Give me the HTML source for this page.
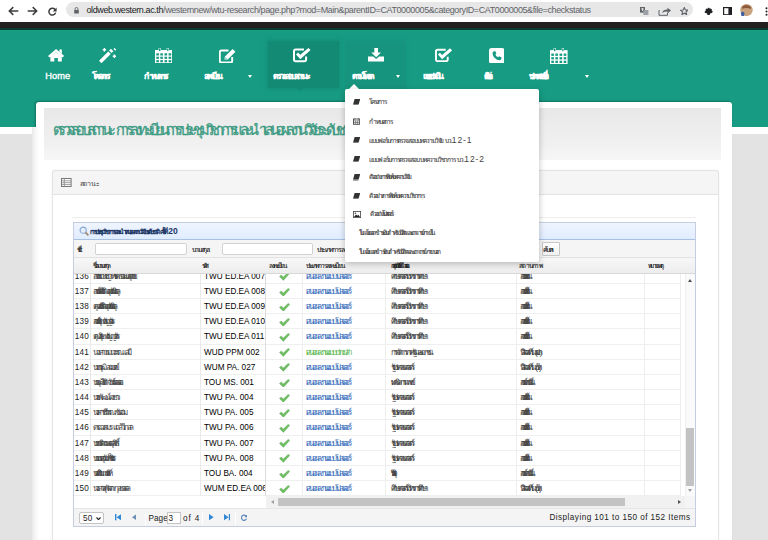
<!DOCTYPE html>
<html><head><meta charset="utf-8">
<title>WTU Research - ตรวจสอบสถานะ</title>
<style>
*{box-sizing:border-box;margin:0;padding:0}
html,body{width:768px;height:540px;overflow:hidden;background:#fff;font-family:"Liberation Sans",sans-serif;position:relative}
.a{position:absolute}
svg{display:block}
.t{font-size:6px;-webkit-text-stroke:0.12px currentColor}
/* browser chrome */
#chrome{left:0;top:0;width:768px;height:22.4px;background:#fff}
#pill{left:65.7px;top:1.8px;width:627px;height:15.4px;border-radius:7.7px;background:#e7e7e7}
#url{left:86.5px;top:5.2px;font-size:9px;line-height:11px;color:#5f6368;white-space:nowrap;letter-spacing:-0.4px}
#url b{font-weight:normal;color:#202124}
#dark{left:0;top:22.4px;width:768px;height:7.4px;background:#231f20;border-bottom:2px solid #0b3a2f}
/* header */
#hdr{left:0;top:29.8px;width:768px;height:97.2px;background:#179b83}
#wstrip{left:0;top:127px;width:768px;height:7px;background:#fff}
#gray{left:0;top:134px;width:768px;height:406px;background:#e3e3e3}
#cont{left:36px;top:101.5px;width:696.4px;height:440px;background:#fff;border-radius:3px 3px 0 0;box-shadow:-1px -1px 2px rgba(0,40,30,0.35)}
.act{background:#138a74;box-shadow:0 0 4px 1px rgba(19,138,116,0.8)}
.nv{top:69.8px;height:12px;line-height:12px;color:#fff;white-space:nowrap;font-size:8px}
.nv.t{font-size:8.6px;-webkit-text-stroke:0.6px #fff}
.car{position:absolute;width:0;height:0;border-left:2.6px solid transparent;border-right:2.6px solid transparent;border-top:3px solid #fff}
/* title */
#tband{left:44px;top:107.8px;width:677px;height:52.4px;background:linear-gradient(#e8e8e8 0,#eaeaea 22%,#ececec 26%,#eeeeee 52%,#f0f0f0 60%,#f0f0f0 72%,#f3f3f3 80%,#f6f6f6 100%)}
#title{left:53px;top:120px;height:20px;line-height:20px;color:#3f9c84;font-size:14.5px;white-space:nowrap;-webkit-text-stroke:0.3px #3f9c84}
/* panel */
#panel{left:52px;top:170px;width:666.5px;height:380px;border:1px solid #e6e6e6;box-shadow:0 0 3px rgba(0,0,0,0.05);border-radius:3px;background:#fff}
#phead{left:52px;top:170px;width:666.5px;height:24.5px;background:#f5f5f5;border:1px solid #e3e3e3;border-radius:3px 3px 0 0}
#ptext{left:79.5px;top:178.5px;font-size:7px;line-height:10px;color:#555;-webkit-text-stroke:0.1px #555}
/* grid */
#grid{left:72.5px;top:222.2px;width:623.5px;height:304.6px;border:1px solid #c6cde0;background:#fff;overflow:hidden}
#gtitle{left:0;top:0;width:100%;height:16.6px;background:linear-gradient(#eff5ff 0,#e0ecff 100%);border-bottom:1px solid #a9c2e3}
#gtt{left:16px;top:3px;line-height:11px;color:#1b3766;font-size:6.5px;-webkit-text-stroke:0.3px #1b3766;white-space:nowrap}
#tbar{left:0;top:16.6px;width:100%;height:17.8px;background:#f5f5f5;border-bottom:1px solid #e2e2e2}
.inp{position:absolute;top:3.4px;height:12.2px;background:#fff;border:1px solid #d2d2d2;border-radius:2px}
.lbl{position:absolute;top:3.8px;line-height:11px;font-size:6.8px;color:#222;white-space:nowrap}
#ghead{left:0;top:34.4px;width:100%;height:16.8px;background:linear-gradient(#f7f7f7 0,#ededed 100%);border-bottom:1px solid #d8d8d8}
.hc{position:absolute;top:2.8px;line-height:11px;color:#222;white-space:nowrap;font-size:6.5px}
#gbody{left:0;top:51.2px;width:100%;height:222px;overflow:hidden}
.row{position:absolute;left:0;width:607px;height:15.17px;border-bottom:1px solid #efefef}
.c{position:absolute;top:0;height:15.15px;line-height:15px;font-size:8.2px;color:#000;white-space:nowrap;overflow:hidden}
.c.t{font-size:8px;color:#4a4a4a;-webkit-text-stroke:0.05px currentColor}
.rn{left:0;width:17px;text-align:right;padding-right:0.6px;border-right:1px solid #e8e8e8;color:#222;letter-spacing:0.15px}
.nm{left:17px;width:110px;padding-left:2.5px;border-right:1px solid #eaeaea}
.cd{left:127px;width:65.2px;padding-left:3.5px;border-right:1px solid #dcdcdc}
.ck{left:192.2px;width:37.3px;border-right:1px solid #eeeeee}
.ck svg{position:absolute;left:13.3px;top:3.6px}
.ty{left:229.5px;width:83px;padding-left:2.7px;border-right:1px solid #eeeeee}
.c.tp0{color:#4374c0}
.c.tp1{color:#5dba55}
.gp{left:312.5px;width:131px;padding-left:4.5px;border-right:1px solid #eeeeee}
.stt{left:443.5px;width:127.5px;padding-left:2.5px;border-right:1px solid #eeeeee}
.nt{left:571px;width:36px;border-right:1px solid #eeeeee}
#vscroll{left:611.5px;top:51.2px;width:10px;height:222px;background:#fafafa;border-left:1px solid #f0f0f0}
#vthumb{left:612.5px;top:205px;width:8px;height:58px;background:#c3c3c3}
#hscroll{left:192.2px;top:273.2px;width:429.3px;height:11.2px;background:#f1f1f1}
#hthumb{left:204px;top:274.6px;width:347.5px;height:8px;background:#c3c3c3}
#corner{left:611.5px;top:273.2px;width:10px;height:11.2px;background:#f5f5f5}
.arr{position:absolute;width:0;height:0}
#pager{left:0;top:284.4px;width:100%;height:19.2px;background:#f4f4f4;border-top:1px solid #e6e6e6}
.pt{position:absolute;top:4px;font-size:8.2px;line-height:11px;color:#222;white-space:nowrap}
/* dropdown */
#dd{left:345.4px;top:89px;width:193.4px;height:173.3px;background:#fff;border-radius:2px;box-shadow:0 2px 6px rgba(0,0,0,0.25)}
.di{position:absolute;left:23.8px;height:12px;line-height:12px;color:#444;font-size:6.5px;white-space:nowrap;-webkit-text-stroke:0.1px #444}
.dic{position:absolute;left:7.5px}
</style></head>
<body>
<div id="chrome" class="a"></div>
<svg class="a" style="left:7.5px;top:6px" width="11" height="10" viewBox="0 0 11 10"><path d="M10.3 5 H1.6 M5.3 1.1 L1.3 5 L5.3 8.9" fill="none" stroke="#3c3c3c" stroke-width="1.5"/></svg>
<svg class="a" style="left:26.8px;top:6px" width="11" height="10" viewBox="0 0 11 10"><path d="M0.7 5 H9.4 M5.7 1.1 L9.7 5 L5.7 8.9" fill="none" stroke="#3c3c3c" stroke-width="1.5"/></svg>
<svg class="a" style="left:47.5px;top:6.5px" width="9" height="9" viewBox="0 0 9 9"><path d="M7.4 3.2 A3.4 3.4 0 1 0 7.6 5.6" fill="none" stroke="#3c3c3c" stroke-width="1.5"/><path d="M8.6 0.6 V4.4 H4.8 Z" fill="#3c3c3c"/></svg>
<div id="pill" class="a"></div>
<svg class="a" style="left:74.3px;top:7.3px" width="5" height="6.5" viewBox="0 0 5 6.5"><path d="M1.1 3 V1.9 A1.4 1.4 0 0 1 3.9 1.9 V3" fill="none" stroke="#5f6368" stroke-width="0.9"/><rect x="0.2" y="2.9" width="4.6" height="3.6" rx="0.5" fill="#5f6368"/></svg>
<div id="url" class="a"><b>oldweb.western.ac.th</b>/westernnew/wtu-research/page.php?mod=Main&amp;parentID=CAT0000005&amp;categoryID=CAT0000005&amp;file=checkstatus</div>
<svg class="a" style="left:640px;top:6.7px" width="8.5" height="8.7" viewBox="0 0 8.5 8.7"><rect x="0" y="0" width="5" height="5.6" fill="#5f6368"/><rect x="3.4" y="3" width="5" height="5.6" fill="#9aa0a6"/><path d="M1 2 H4 M2.5 1 V4" stroke="#fff" stroke-width="0.7"/></svg>
<svg class="a" style="left:657.5px;top:6.7px" width="14" height="9" viewBox="0 0 14 9"><path d="M1 3 V8.3 H9.5 V6" fill="none" stroke="#5f6368" stroke-width="1"/><path d="M4 6 Q5 2.6 9.5 2.6 V0.8 L13 3.6 L9.5 6.4 V4.6 Q6 4.6 4 6 Z" fill="#5f6368"/></svg>
<svg class="a" style="left:679.8px;top:6.5px" width="8.6" height="8.4" viewBox="0 0 10 9.6"><path d="M5 0.6 L6.3 3.4 L9.3 3.6 L7 5.6 L7.7 8.7 L5 7.1 L2.3 8.7 L3 5.6 L0.7 3.6 L3.7 3.4 Z" fill="none" stroke="#5f6368" stroke-width="1.3"/></svg>
<svg class="a" style="left:704px;top:6.7px" width="8.5" height="8.5" viewBox="0 0 8.5 8.5"><path d="M0.5 2.3 H2.4 A1.3 1.3 0 0 1 4.9 2.3 H6.6 V4 A1.3 1.3 0 0 1 6.6 6.5 V8.2 H4.6 A1.2 1.2 0 0 0 2.4 8.2 H0.5 V6.3 A1.2 1.2 0 0 0 0.5 4.1 Z" fill="#202124" transform="rotate(-45 4.25 4.25) translate(0.6 -0.3)"/></svg>
<svg class="a" style="left:722.9px;top:6.7px" width="9.2" height="8.4" viewBox="0 0 9.2 8.4"><rect x="0.6" y="0.6" width="8" height="7.2" fill="none" stroke="#202124" stroke-width="1.2"/><rect x="5.4" y="0.6" width="3.2" height="7.2" fill="#202124"/></svg>
<svg class="a" style="left:740px;top:3.9px" width="13" height="12.2" viewBox="0 0 13 12.2"><ellipse cx="6.5" cy="6.1" rx="6.3" ry="6" fill="#c9a27e"/><path d="M2 3 Q6 -1 11 3 L10.6 5 Q6.5 3.2 2.4 5 Z" fill="#8a5a3a"/><path d="M0.8 9 Q2.5 6.5 4.5 9 L4 12.2 H1.5 Z" fill="#3e5fa8"/></svg>
<svg class="a" style="left:764.5px;top:6.5px" width="3" height="9" viewBox="0 0 3 9"><circle cx="1.5" cy="1.2" r="1" fill="#202124"/><circle cx="1.5" cy="4.5" r="1" fill="#202124"/><circle cx="1.5" cy="7.8" r="1" fill="#202124"/></svg>
<div id="dark" class="a"></div>
<div id="hdr" class="a"></div>
<div id="wstrip" class="a"></div>
<div id="gray" class="a"></div>
<div id="cont" class="a"></div>
<div class="a" style="left:32px;top:127px;width:7px;height:413px;background:linear-gradient(to right,#e9e9e9,#f4f4f4 40%,#fff)"></div>

<!-- nav -->
<div class="a act" style="left:267.5px;top:41.2px;width:71.5px;height:47px"></div>
<div class="a" style="left:296px;top:87.5px;width:0;height:0;border-left:4px solid transparent;border-right:4px solid transparent;border-top:3.5px solid #138a74"></div>
<div class="a act" style="left:344.6px;top:41.2px;width:61.5px;height:47px;background:#16947d;box-shadow:0 0 3px rgba(22,148,125,0.8)"></div>

<div class="a nv" style="left:45.3px;top:70.2px;font-size:9.3px;-webkit-text-stroke:0.35px #fff">Home</div>
<div class="a nv t" style="left:91.6px;letter-spacing:-2.66px">โครงการ</div>
<div class="a nv t" style="left:143.8px;letter-spacing:-3.01px">กำหนดการ</div>
<div class="a nv t" style="left:203.6px;letter-spacing:-2.83px">ลงทะเบียน</div>
<div class="a car" style="left:247.5px;top:74.5px"></div>
<div class="a nv t" style="left:272.9px;letter-spacing:-2.17px">ตรวจสอบสถานะ</div>
<div class="a nv t" style="left:351.7px;letter-spacing:-2.96px">ดาวน์โหลด</div>
<div class="a car" style="left:395.5px;top:74.5px"></div>
<div class="a nv t" style="left:422.5px;letter-spacing:-3.11px">แบบประเมิน</div>
<div class="a nv t" style="left:483.8px;letter-spacing:-4.70px">ติดต่อ</div>
<div class="a nv t" style="left:528.7px;letter-spacing:-3.52px">ประกาศรายชื่อ</div>
<div class="a car" style="left:584.5px;top:74.5px"></div>
<!-- nav icons -->
<svg class="a" style="left:48.3px;top:49.3px" width="16.2" height="12.5" viewBox="0 0 16.2 12.5"><path fill="#fff" d="M8.1 0 L16.2 6.9 L14.6 8.5 L8.1 3 L1.6 8.5 L0 6.9 Z M11.4 0.5 H13.9 V4.7 L11.4 2.6 Z M2.4 7.7 L8.1 3.2 L13.8 7.7 V12.5 H9.9 V9.1 H6.3 V12.5 H2.4 Z"/></svg>
<svg class="a" style="left:98.9px;top:48.2px" width="17.2" height="15.2" viewBox="0 0 17.2 15.2"><path fill="#fff" d="M0 12.7 L9.3 3.4 L11.8 5.9 L2.5 15.2 Z M10.1 2.6 L11.9 0.8 L14.4 3.3 L12.6 5.1 Z"/><path stroke="#fff" stroke-width="1.4" d="M5.4 0 V3.4 M3.7 1.7 H7.1 M15.4 6.6 V10 M13.7 8.3 H17.1 M15 0.4 L16.8 2.2"/></svg>
<svg class="a" style="left:154.8px;top:47.9px" width="17.5" height="15.6" viewBox="0 0 17.5 15.6"><path fill="#fff" d="M0 2 H17.5 V15.6 H0 Z"/><path fill="#fff" d="M3.6 0 H5.8 V3.6 H3.6 Z M11.7 0 H13.9 V3.6 H11.7 Z"/><g fill="#179b83"><rect x="4" y="0.4" width="1.4" height="2.6"/><rect x="12.1" y="0.4" width="1.4" height="2.6"/>
<rect x="1.3" y="5.3" width="2.6" height="2.2"/><rect x="5.3" y="5.3" width="2.6" height="2.2"/><rect x="9.5" y="5.3" width="2.6" height="2.2"/><rect x="13.6" y="5.3" width="2.6" height="2.2"/>
<rect x="1.3" y="8.7" width="2.6" height="2.2"/><rect x="5.3" y="8.7" width="2.6" height="2.2"/><rect x="9.5" y="8.7" width="2.6" height="2.2"/><rect x="13.6" y="8.7" width="2.6" height="2.2"/>
<rect x="1.3" y="12.1" width="2.6" height="2.2"/><rect x="5.3" y="12.1" width="2.6" height="2.2"/><rect x="9.5" y="12.1" width="2.6" height="2.2"/><rect x="13.6" y="12.1" width="2.6" height="2.2"/></g></svg>
<svg class="a" style="left:219.2px;top:48.5px" width="17.6" height="14.3" viewBox="0 0 17.6 14.3"><path fill="none" stroke="#fff" stroke-width="1.9" d="M9.5 1.5 H2.4 Q0.8 1.5 0.8 3.1 V11.9 Q0.8 13.5 2.4 13.5 H11.6 Q13.2 13.5 13.2 11.9 V8"/><path fill="#fff" d="M5.4 10.4 L6 7.6 L13.6 0 L16.4 2.8 L8.8 10.4 Z"/><path fill="#179b83" d="M6.6 8.3 L7.9 9.6 L6.5 9.9 Z"/></svg>
<svg class="a" style="left:292.9px;top:48.4px" width="18" height="14.4" viewBox="0 0 18 14.4"><path fill="none" stroke="#fff" stroke-width="2" d="M11 1.4 H2.6 Q1 1.4 1 3.1 V11.6 Q1 13.3 2.6 13.3 H11.4 Q13.1 13.3 13.1 11.6 V8.6"/><path fill="#fff" d="M3 6.4 L5 4.5 L7.3 6.8 L15.4 0 L17.6 2.1 L7.3 11.2 Z"/></svg>
<svg class="a" style="left:367.8px;top:48.4px" width="16.3" height="13.6" viewBox="0 0 16.3 13.6"><path fill="#fff" d="M6.3 0 H10 V4.6 H13 L8.15 9.3 L3.3 4.6 H6.3 Z M0 8.4 H5.2 L8.15 11 L11.1 8.4 H16.3 V13.6 H0 Z"/></svg>
<svg class="a" style="left:434.8px;top:47.9px" width="17.5" height="14.6" viewBox="0 0 18 14.4"><path fill="none" stroke="#fff" stroke-width="2" d="M11 1.4 H2.6 Q1 1.4 1 3.1 V11.6 Q1 13.3 2.6 13.3 H11.4 Q13.1 13.3 13.1 11.6 V8.6"/><path fill="#fff" d="M3 6.4 L5 4.5 L7.3 6.8 L15.4 0 L17.6 2.1 L7.3 11.2 Z"/></svg>
<svg class="a" style="left:488.5px;top:47.9px" width="15.6" height="15.6" viewBox="0 0 15.6 15.6"><rect width="15.6" height="15.6" rx="2.6" fill="#fff"/><path fill="#179b83" d="M4.6 3.4 L6.2 3 L7.4 5.6 L6.4 6.6 Q7.2 8.6 9.1 9.3 L10.1 8.3 L12.6 9.5 L12.3 11.1 Q11.8 12.4 10.4 12.3 Q6.6 11.8 4.3 8.2 Q3.4 6.4 3.6 4.6 Q3.8 3.7 4.6 3.4 Z"/></svg>
<svg class="a" style="left:550px;top:47.6px" width="17.6" height="16.4" viewBox="0 0 17.5 15.6" preserveAspectRatio="none"><path fill="#fff" d="M0 2 H17.5 V15.6 H0 Z"/><path fill="#fff" d="M3.6 0 H5.8 V3.6 H3.6 Z M11.7 0 H13.9 V3.6 H11.7 Z"/><g fill="#179b83"><rect x="4" y="0.4" width="1.4" height="2.6"/><rect x="12.1" y="0.4" width="1.4" height="2.6"/>
<rect x="1.3" y="5.3" width="2.6" height="2.2"/><rect x="5.3" y="5.3" width="2.6" height="2.2"/><rect x="9.5" y="5.3" width="2.6" height="2.2"/><rect x="13.6" y="5.3" width="2.6" height="2.2"/>
<rect x="1.3" y="8.7" width="2.6" height="2.2"/><rect x="5.3" y="8.7" width="2.6" height="2.2"/><rect x="9.5" y="8.7" width="2.6" height="2.2"/><rect x="13.6" y="8.7" width="2.6" height="2.2"/>
<rect x="1.3" y="12.1" width="2.6" height="2.2"/><rect x="5.3" y="12.1" width="2.6" height="2.2"/><rect x="9.5" y="12.1" width="2.6" height="2.2"/><rect x="13.6" y="12.1" width="2.6" height="2.2"/></g></svg>


<!-- title band -->
<div id="tband" class="a"></div>
<div id="title" class="a" style="letter-spacing:-3.75px;word-spacing:3.75px">ตรวจสอบสถานะ การลงทะเบียนการประชุมวิชาการและนำเสนอผลงานวิจัยระดับชาติ ครั้งที่<span style="letter-spacing:0;word-spacing:0;font-family:'Liberation Serif',serif;font-size:16.5px;-webkit-text-stroke:0;margin-left:1px">20</span></div>

<!-- panel -->
<div id="panel" class="a"></div>
<div id="phead" class="a"></div>
<svg class="a" style="left:61.2px;top:178.3px" width="10.6" height="9" viewBox="0 0 10.6 9"><rect x="0.5" y="0.5" width="9.6" height="8" fill="#fff" stroke="#777" stroke-width="1"/><path d="M0.5 2.8H10.1M0.5 4.7H10.1M0.5 6.6H10.1M3.3 0.5V8.5" stroke="#888" stroke-width="0.8"/></svg>
<div id="ptext" class="a t" style="letter-spacing:-0.16px">สถานะ</div>

<div class="a" style="left:72px;top:217.3px;width:624px;height:1px;background:#eeeeee"></div>
<!-- grid -->
<div id="grid" class="a">
  <div id="gtitle" class="a"></div>
  <svg class="a" style="left:5.5px;top:2.6px" width="10" height="10" viewBox="0 0 10 10"><circle cx="4.2" cy="4.2" r="3.1" fill="#e4eef9" stroke="#86a6cf" stroke-width="1.1"/><path d="M6.4 6.4L9.4 9.4" stroke="#9a8a6a" stroke-width="1.7"/></svg>
  <div id="gtt" class="a" style="letter-spacing:-1.99px;word-spacing:1.99px">การประชุมวิชาการและนำเสนอผลงานวิจัยระดับชาติ ครั้งที่<span style="letter-spacing:0;word-spacing:0;font-size:8.5px;font-weight:bold;-webkit-text-stroke:0;margin-left:2.5px">20</span></div>
  <div id="tbar" class="a">
    <div class="lbl t" style="left:3.3px;letter-spacing:-3.33px;word-spacing:3.33px">ชื่อ :</div>
    <div class="inp" style="left:21.5px;width:92px"></div>
    <div class="lbl t" style="left:118.2px;letter-spacing:-1.36px">นามสกุล:</div>
    <div class="inp" style="left:148.5px;width:90.8px"></div>
    <div class="lbl t" style="left:243.2px;letter-spacing:-1.11px">ประเภทการลงทะเบียน:</div>
    <div class="inp" style="left:468.2px;width:18px;top:1.9px;height:14.5px;border-radius:1px;border-color:#c6c6c6;background:linear-gradient(#fff,#f0f0f0)"></div>
    <div class="lbl t" style="left:469.5px;letter-spacing:-2.25px">ค้นหา</div>
  </div>
  <div id="ghead" class="a">
    <div class="hc t" style="left:19.9px;letter-spacing:-2.08px">ชื่อ-นามสกุล</div>
    <div class="hc t" style="left:128px;letter-spacing:-1.83px">รหัส</div>
    <div class="hc t" style="left:195.5px;letter-spacing:-1.50px">ลงทะเบียน</div>
    <div class="hc t" style="left:232.2px;letter-spacing:-1.24px">ประเภทการลงทะเบียน</div>
    <div class="hc t" style="left:317.5px;letter-spacing:-3.00px">กลุ่มงานวิจัยที่นำเสนอ</div>
    <div class="hc t" style="left:445.5px;letter-spacing:-0.71px">สถานภาพ</div>
    <div class="hc t" style="left:574.3px;letter-spacing:-1.64px">หมายเหตุ</div>
  </div>
  <div id="gbody" class="a">
<div class="row" style="top:-5.60px"><div class="c rn">136</div><div class="c nm t" style="letter-spacing:-3.56px;word-spacing:3.56px">อาจารย์ปณิชญา ทวีโชค ธนวัฒน์สุขสบาย</div><div class="c cd">TWU ED.EA 007</div><div class="c ck"><svg width="11" height="8.6" viewBox="0 0 11 8.6"><path d="M0.4 4.4 L2.3 2.9 L4.3 5 L9.3 0.2 L10.7 1.4 L4.4 8.4 Z" fill="#6fbf62" stroke="#4f9a4a" stroke-width="0.3"/></svg></div><div class="c ty t tp0" style="letter-spacing:-2.25px">เสนอผลงานแบบโปสเตอร์</div><div class="c gp t" style="letter-spacing:-2.91px">ศึกษาศาสตร์-บริหารการศึกษา</div><div class="c stt t" style="letter-spacing:-3.65px">อาจารย์เวสเทิร์น</div><div class="c nt"></div></div>
<div class="row" style="top:9.57px"><div class="c rn">137</div><div class="c nm t" style="letter-spacing:-3.73px;word-spacing:3.73px">อาจารย์สมเกียรติ อุดมรัตนนิยกุล</div><div class="c cd">TWU ED.EA 008</div><div class="c ck"><svg width="11" height="8.6" viewBox="0 0 11 8.6"><path d="M0.4 4.4 L2.3 2.9 L4.3 5 L9.3 0.2 L10.7 1.4 L4.4 8.4 Z" fill="#6fbf62" stroke="#4f9a4a" stroke-width="0.3"/></svg></div><div class="c ty t tp0" style="letter-spacing:-2.25px">เสนอผลงานแบบโปสเตอร์</div><div class="c gp t" style="letter-spacing:-2.91px">ศึกษาศาสตร์-บริหารการศึกษา</div><div class="c stt t" style="letter-spacing:-3.65px">อาจารย์เวสเทิร์น</div><div class="c nt"></div></div>
<div class="row" style="top:24.74px"><div class="c rn">138</div><div class="c nm t" style="letter-spacing:-3.89px;word-spacing:3.89px">คุณสมเกียรติ อุดมรัตนนิยกุล</div><div class="c cd">TWU ED.EA 009</div><div class="c ck"><svg width="11" height="8.6" viewBox="0 0 11 8.6"><path d="M0.4 4.4 L2.3 2.9 L4.3 5 L9.3 0.2 L10.7 1.4 L4.4 8.4 Z" fill="#6fbf62" stroke="#4f9a4a" stroke-width="0.3"/></svg></div><div class="c ty t tp0" style="letter-spacing:-2.25px">เสนอผลงานแบบโปสเตอร์</div><div class="c gp t" style="letter-spacing:-2.91px">ศึกษาศาสตร์-บริหารการศึกษา</div><div class="c stt t" style="letter-spacing:-3.65px">อาจารย์เวสเทิร์น</div><div class="c nt"></div></div>
<div class="row" style="top:39.91px"><div class="c rn">139</div><div class="c nm t" style="letter-spacing:-3.87px;word-spacing:3.87px">อาจารย์สุริยะ หวังญญาวัตร</div><div class="c cd">TWU ED.EA 010</div><div class="c ck"><svg width="11" height="8.6" viewBox="0 0 11 8.6"><path d="M0.4 4.4 L2.3 2.9 L4.3 5 L9.3 0.2 L10.7 1.4 L4.4 8.4 Z" fill="#6fbf62" stroke="#4f9a4a" stroke-width="0.3"/></svg></div><div class="c ty t tp0" style="letter-spacing:-2.25px">เสนอผลงานแบบโปสเตอร์</div><div class="c gp t" style="letter-spacing:-2.91px">ศึกษาศาสตร์-บริหารการศึกษา</div><div class="c stt t" style="letter-spacing:-3.65px">อาจารย์เวสเทิร์น</div><div class="c nt"></div></div>
<div class="row" style="top:55.08px"><div class="c rn">140</div><div class="c nm t" style="letter-spacing:-3.53px;word-spacing:3.53px">คุณสุริยะ หวังญญาวัตร</div><div class="c cd">TWU ED.EA 011</div><div class="c ck"><svg width="11" height="8.6" viewBox="0 0 11 8.6"><path d="M0.4 4.4 L2.3 2.9 L4.3 5 L9.3 0.2 L10.7 1.4 L4.4 8.4 Z" fill="#6fbf62" stroke="#4f9a4a" stroke-width="0.3"/></svg></div><div class="c ty t tp0" style="letter-spacing:-2.25px">เสนอผลงานแบบโปสเตอร์</div><div class="c gp t" style="letter-spacing:-2.91px">ศึกษาศาสตร์-บริหารการศึกษา</div><div class="c stt t" style="letter-spacing:-3.65px">อาจารย์เวสเทิร์น</div><div class="c nt"></div></div>
<div class="row" style="top:70.25px"><div class="c rn">141</div><div class="c nm t" style="letter-spacing:-2.39px;word-spacing:2.39px">นางสาวธมนวรรณ เสมี</div><div class="c cd">WUD PPM 002</div><div class="c ck"><svg width="11" height="8.6" viewBox="0 0 11 8.6"><path d="M0.4 4.4 L2.3 2.9 L4.3 5 L9.3 0.2 L10.7 1.4 L4.4 8.4 Z" fill="#6fbf62" stroke="#4f9a4a" stroke-width="0.3"/></svg></div><div class="c ty t tp1" style="letter-spacing:-2.25px">เสนอผลงานแบบปากเปล่า</div><div class="c gp t" style="letter-spacing:-2.61px">การจัดการภาครัฐและเอกชน</div><div class="c stt t" style="letter-spacing:-3.06px;word-spacing:3.06px">นิสิตเวสเทิร์น (ป.เอก)</div><div class="c nt"></div></div>
<div class="row" style="top:85.42px"><div class="c rn">142</div><div class="c nm t" style="letter-spacing:-3.11px;word-spacing:3.11px">นายวรวุฒิ สมมาตย์</div><div class="c cd">WUM PA. 027</div><div class="c ck"><svg width="11" height="8.6" viewBox="0 0 11 8.6"><path d="M0.4 4.4 L2.3 2.9 L4.3 5 L9.3 0.2 L10.7 1.4 L4.4 8.4 Z" fill="#6fbf62" stroke="#4f9a4a" stroke-width="0.3"/></svg></div><div class="c ty t tp0" style="letter-spacing:-2.25px">เสนอผลงานแบบโปสเตอร์</div><div class="c gp t" style="letter-spacing:-2.93px">รัฐประศาสนศาสตร์</div><div class="c stt t" style="letter-spacing:-3.04px;word-spacing:3.04px">นิสิตเวสเทิร์น (ป.โท)</div><div class="c nt"></div></div>
<div class="row" style="top:100.59px"><div class="c rn">143</div><div class="c nm t" style="letter-spacing:-3.36px;word-spacing:3.36px">นายวุฒิไชติ จันทร์แสนตอ</div><div class="c cd">TOU MS. 001</div><div class="c ck"><svg width="11" height="8.6" viewBox="0 0 11 8.6"><path d="M0.4 4.4 L2.3 2.9 L4.3 5 L9.3 0.2 L10.7 1.4 L4.4 8.4 Z" fill="#6fbf62" stroke="#4f9a4a" stroke-width="0.3"/></svg></div><div class="c ty t tp0" style="letter-spacing:-2.25px">เสนอผลงานแบบโปสเตอร์</div><div class="c gp t" style="letter-spacing:-2.77px">เทคนิคการแพทย์</div><div class="c stt t" style="letter-spacing:-3.77px">อาจารย์สถาบันอื่น</div><div class="c nt"></div></div>
<div class="row" style="top:115.76px"><div class="c rn">144</div><div class="c nm t" style="letter-spacing:-2.84px;word-spacing:2.84px">นายพัฒน์ ดงยาว</div><div class="c cd">TWU PA. 004</div><div class="c ck"><svg width="11" height="8.6" viewBox="0 0 11 8.6"><path d="M0.4 4.4 L2.3 2.9 L4.3 5 L9.3 0.2 L10.7 1.4 L4.4 8.4 Z" fill="#6fbf62" stroke="#4f9a4a" stroke-width="0.3"/></svg></div><div class="c ty t tp0" style="letter-spacing:-2.25px">เสนอผลงานแบบโปสเตอร์</div><div class="c gp t" style="letter-spacing:-2.93px">รัฐประศาสนศาสตร์</div><div class="c stt t" style="letter-spacing:-3.65px">อาจารย์เวสเทิร์น</div><div class="c nt"></div></div>
<div class="row" style="top:130.93px"><div class="c rn">145</div><div class="c nm t" style="letter-spacing:-2.85px;word-spacing:2.85px">นางสาวชรีวรรณ ขันอ่วม</div><div class="c cd">TWU PA. 005</div><div class="c ck"><svg width="11" height="8.6" viewBox="0 0 11 8.6"><path d="M0.4 4.4 L2.3 2.9 L4.3 5 L9.3 0.2 L10.7 1.4 L4.4 8.4 Z" fill="#6fbf62" stroke="#4f9a4a" stroke-width="0.3"/></svg></div><div class="c ty t tp0" style="letter-spacing:-2.25px">เสนอผลงานแบบโปสเตอร์</div><div class="c gp t" style="letter-spacing:-2.93px">รัฐประศาสนศาสตร์</div><div class="c stt t" style="letter-spacing:-3.65px">อาจารย์เวสเทิร์น</div><div class="c nt"></div></div>
<div class="row" style="top:146.10px"><div class="c rn">146</div><div class="c nm t" style="letter-spacing:-2.31px;word-spacing:2.31px">ดร.ฉวงสมร แกล้วไกสล</div><div class="c cd">TWU PA. 006</div><div class="c ck"><svg width="11" height="8.6" viewBox="0 0 11 8.6"><path d="M0.4 4.4 L2.3 2.9 L4.3 5 L9.3 0.2 L10.7 1.4 L4.4 8.4 Z" fill="#6fbf62" stroke="#4f9a4a" stroke-width="0.3"/></svg></div><div class="c ty t tp0" style="letter-spacing:-2.25px">เสนอผลงานแบบโปสเตอร์</div><div class="c gp t" style="letter-spacing:-2.93px">รัฐประศาสนศาสตร์</div><div class="c stt t" style="letter-spacing:-3.65px">อาจารย์เวสเทิร์น</div><div class="c nt"></div></div>
<div class="row" style="top:161.27px"><div class="c rn">147</div><div class="c nm t" style="letter-spacing:-3.50px;word-spacing:3.50px">นายชวลิต เกษมจตุลสิทธิ์</div><div class="c cd">TWU PA. 007</div><div class="c ck"><svg width="11" height="8.6" viewBox="0 0 11 8.6"><path d="M0.4 4.4 L2.3 2.9 L4.3 5 L9.3 0.2 L10.7 1.4 L4.4 8.4 Z" fill="#6fbf62" stroke="#4f9a4a" stroke-width="0.3"/></svg></div><div class="c ty t tp0" style="letter-spacing:-2.25px">เสนอผลงานแบบโปสเตอร์</div><div class="c gp t" style="letter-spacing:-2.93px">รัฐประศาสนศาสตร์</div><div class="c stt t" style="letter-spacing:-3.65px">อาจารย์เวสเทิร์น</div><div class="c nt"></div></div>
<div class="row" style="top:176.44px"><div class="c rn">148</div><div class="c nm t" style="letter-spacing:-3.49px;word-spacing:3.49px">นายนายสุวนัย เพ็ชรวิเชร</div><div class="c cd">TWU PA. 008</div><div class="c ck"><svg width="11" height="8.6" viewBox="0 0 11 8.6"><path d="M0.4 4.4 L2.3 2.9 L4.3 5 L9.3 0.2 L10.7 1.4 L4.4 8.4 Z" fill="#6fbf62" stroke="#4f9a4a" stroke-width="0.3"/></svg></div><div class="c ty t tp0" style="letter-spacing:-2.25px">เสนอผลงานแบบโปสเตอร์</div><div class="c gp t" style="letter-spacing:-2.93px">รัฐประศาสนศาสตร์</div><div class="c stt t" style="letter-spacing:-3.65px">อาจารย์เวสเทิร์น</div><div class="c nt"></div></div>
<div class="row" style="top:191.61px"><div class="c rn">149</div><div class="c nm t" style="letter-spacing:-3.58px;word-spacing:3.58px">นางคติรินย พรงสิงห์</div><div class="c cd">TOU BA. 004</div><div class="c ck"><svg width="11" height="8.6" viewBox="0 0 11 8.6"><path d="M0.4 4.4 L2.3 2.9 L4.3 5 L9.3 0.2 L10.7 1.4 L4.4 8.4 Z" fill="#6fbf62" stroke="#4f9a4a" stroke-width="0.3"/></svg></div><div class="c ty t tp0" style="letter-spacing:-2.25px">เสนอผลงานแบบโปสเตอร์</div><div class="c gp t" style="letter-spacing:-4.17px">บริหารธุรกิจ</div><div class="c stt t" style="letter-spacing:-3.77px">อาจารย์สถาบันอื่น</div><div class="c nt"></div></div>
<div class="row" style="top:206.78px"><div class="c rn">150</div><div class="c nm t" style="letter-spacing:-2.81px;word-spacing:2.81px">นางสาวสุพัตตา กุลยาลตล</div><div class="c cd">WUM ED.EA 006</div><div class="c ck"><svg width="11" height="8.6" viewBox="0 0 11 8.6"><path d="M0.4 4.4 L2.3 2.9 L4.3 5 L9.3 0.2 L10.7 1.4 L4.4 8.4 Z" fill="#6fbf62" stroke="#4f9a4a" stroke-width="0.3"/></svg></div><div class="c ty t tp0" style="letter-spacing:-2.25px">เสนอผลงานแบบโปสเตอร์</div><div class="c gp t" style="letter-spacing:-2.91px">ศึกษาศาสตร์-บริหารการศึกษา</div><div class="c stt t" style="letter-spacing:-3.04px;word-spacing:3.04px">นิสิตเวสเทิร์น (ป.โท)</div><div class="c nt"></div></div>
  </div>
  <div id="vscroll" class="a"></div>
  <div id="vthumb" class="a"></div>
  <div class="a arr" style="left:614px;top:56px;border-left:2.5px solid transparent;border-right:2.5px solid transparent;border-bottom:3px solid #505050"></div>
  <div class="a arr" style="left:614px;top:266px;border-left:2.5px solid transparent;border-right:2.5px solid transparent;border-top:3px solid #a0a0a0"></div>
  <div id="hscroll" class="a"></div>
  <div id="hthumb" class="a"></div>
  <div class="a arr" style="left:197px;top:276.5px;border-top:2.5px solid transparent;border-bottom:2.5px solid transparent;border-right:3px solid #a0a0a0"></div>
  <div class="a arr" style="left:604px;top:276.5px;border-top:2.5px solid transparent;border-bottom:2.5px solid transparent;border-left:3px solid #505050"></div>
  <div id="corner" class="a"></div>
  <div id="pager" class="a">
    <div class="a" style="left:5.5px;top:3.4px;width:25px;height:12.4px;border:1px solid #c4c4c4;border-radius:2px;background:#fff"></div>
    <div class="pt" style="left:9.6px;top:4px">50</div>
    <svg class="a" style="left:22.6px;top:8.3px" width="5" height="3.4" viewBox="0 0 5 3.4"><path d="M0.5 0.5 L2.5 2.6 L4.5 0.5" fill="none" stroke="#222" stroke-width="1.2"/></svg>
    <svg class="a" style="left:41.5px;top:5.8px" width="6.2" height="6.3" viewBox="0 0 6.2 6.3"><rect x="0" y="0" width="1.4" height="6.3" fill="#2f87d5"/><path d="M6.2 0 V6.3 L1.6 3.15 Z" fill="#2f87d5"/></svg>
    <svg class="a" style="left:58px;top:5.8px" width="4.6" height="6.3" viewBox="0 0 4.6 6.3"><path d="M4.6 0 V6.3 L0 3.15 Z" fill="#6d8fb4"/></svg>
    <div class="a" style="left:71.5px;top:3px;width:1px;height:13px;background:#e2e2e2;border-right:1px solid #fff"></div>
    <div class="pt" style="left:75.1px">Page</div>
    <div class="a" style="left:93px;top:3.4px;width:14.1px;height:12.4px;border:1px solid #c4c4c4;background:#fff"></div>
    <div class="pt" style="left:95px">3</div>
    <div class="pt" style="left:109.5px;letter-spacing:0.9px">of 4</div>
    <div class="a" style="left:128.5px;top:3px;width:1px;height:13px;background:#e2e2e2;border-right:1px solid #fff"></div>
    <svg class="a" style="left:135.5px;top:5.8px" width="4.6" height="6.3" viewBox="0 0 4.6 6.3"><path d="M0 0 V6.3 L4.6 3.15 Z" fill="#2f87d5"/></svg>
    <svg class="a" style="left:150.2px;top:5.8px" width="6.2" height="6.3" viewBox="0 0 6.2 6.3"><path d="M0 0 V6.3 L4.6 3.15 Z" fill="#2f87d5"/><rect x="4.8" y="0" width="1.4" height="6.3" fill="#2f87d5"/></svg>
    <div class="a" style="left:161.5px;top:3px;width:1px;height:13px;background:#e2e2e2;border-right:1px solid #fff"></div>
    <svg class="a" style="left:167.5px;top:5.3px" width="6.4" height="7" viewBox="0 0 6.4 7"><path d="M5.2 2.2 A2.6 2.6 0 1 0 5.5 4.6" fill="none" stroke="#5f87b5" stroke-width="1.2"/><path d="M6.3 0.3 V3.2 H3.4 Z" fill="#5f87b5"/></svg>
    <div class="pt" style="right:4.5px;letter-spacing:0.44px;top:3px">Displaying 101 to 150 of 152 Items</div>
  </div>
</div>

<!-- dropdown -->
<div class="a" style="left:348.5px;top:83.6px;width:0;height:0;border-left:5px solid transparent;border-right:5px solid transparent;border-bottom:5.6px solid #fff"></div>
<div id="dd" class="a">
  <svg class="dic" style="top:9.8px" width="7.2" height="6.6" viewBox="0 0 7.2 6.6"><path d="M1.6 0 H7.2 L5.8 5 H0.2 Z" fill="#333"/><path d="M0.2 5.3 H5.6 L5.4 6.6 H0 Z" fill="#555"/></svg>
  <div class="di t" style="letter-spacing:-1.10px;top:6.9px">โครงการ</div>
  <svg class="dic" style="top:28.9px" width="7.2" height="6.8" viewBox="0 0 7.2 6.8"><rect x="0.5" y="1" width="6.2" height="5.3" fill="none" stroke="#444" stroke-width="0.9"/><path d="M0.5 2.8 H6.7 M0.5 4.5 H6.7 M2.6 2.8 V6.3 M4.6 2.8 V6.3 M1.8 0 V1.6 M5.4 0 V1.6" stroke="#555" stroke-width="0.6"/></svg>
  <div class="di t" style="letter-spacing:-1.19px;top:26.6px">กำหนดการ</div>
  <svg class="dic" style="top:47.5px" width="7.2" height="6.6" viewBox="0 0 7.2 6.6"><path d="M1.6 0 H7.2 L5.8 5 H0.2 Z" fill="#333"/><path d="M0.2 5.3 H5.6 L5.4 6.6 H0 Z" fill="#555"/></svg>
  <div class="di t" style="letter-spacing:-1.07px;word-spacing:1.07px;top:44.6px">แบบฟอร์มการตรวจสอบบทความวิจัย บว.<span style="letter-spacing:0.9px;word-spacing:0;font-size:8.5px;-webkit-text-stroke:0">12-1</span></div>
  <svg class="dic" style="top:66.7px" width="7.2" height="6.6" viewBox="0 0 7.2 6.6"><path d="M1.6 0 H7.2 L5.8 5 H0.2 Z" fill="#333"/><path d="M0.2 5.3 H5.6 L5.4 6.6 H0 Z" fill="#555"/></svg>
  <div class="di t" style="letter-spacing:-0.92px;word-spacing:0.92px;top:63.8px">แบบฟอร์มการตรวจสอบบทความวิชาการ บว.<span style="letter-spacing:0.9px;word-spacing:0;font-size:8.5px;-webkit-text-stroke:0">12-2</span></div>
  <svg class="dic" style="top:85.2px" width="7.2" height="6.6" viewBox="0 0 7.2 6.6"><path d="M1.6 0 H7.2 L5.8 5 H0.2 Z" fill="#333"/><path d="M0.2 5.3 H5.6 L5.4 6.6 H0 Z" fill="#555"/></svg>
  <div class="di t" style="letter-spacing:-1.94px;top:82.3px">ตัวอย่างการพิมพ์บทความวิจัย</div>
  <svg class="dic" style="top:103.5px" width="7.2" height="6.6" viewBox="0 0 7.2 6.6"><path d="M1.6 0 H7.2 L5.8 5 H0.2 Z" fill="#333"/><path d="M0.2 5.3 H5.6 L5.4 6.6 H0 Z" fill="#555"/></svg>
  <div class="di t" style="letter-spacing:-1.63px;top:100.6px">ตัวอย่างการพิมพ์บทความวิชาการ</div>
  <svg class="dic" style="top:121.5px" width="8" height="7" viewBox="0 0 8 7"><rect x="0.4" y="0.4" width="7.2" height="6.2" fill="none" stroke="#444" stroke-width="0.8"/><path d="M1 6 L3 3.4 L4.4 4.8 L5.4 3.8 L7 6 Z" fill="#222"/><circle cx="2.4" cy="2.2" r="0.8" fill="#444"/></svg>
  <div class="di t" style="letter-spacing:-1.92px;top:119.2px;left:25.1px">ตัวอย่างโปสเตอร์</div>
  <div class="di t" style="letter-spacing:-1.79px;top:137.5px;left:13.6px">ใบแจ้งยอดชำระเงินสำหรับนิสิตและอาจารย์ภายใน</div>
  <div class="di t" style="letter-spacing:-1.71px;top:157px;left:13.6px">ใบแจ้งยอดชำระเงินสำหรับนิสิตและอาจารย์ภายนอก</div>
</div>
</body></html>
